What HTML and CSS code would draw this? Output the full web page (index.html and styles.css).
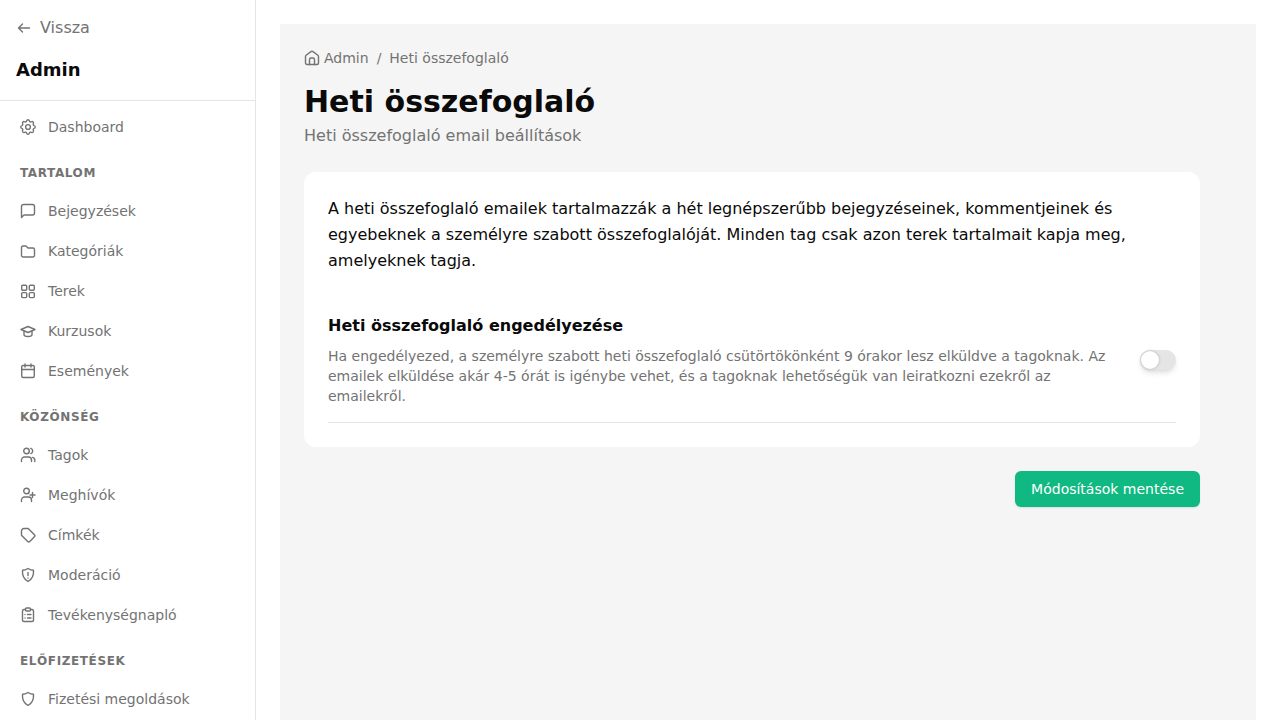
FILE: index.html
```html
<!DOCTYPE html>
<html lang="hu">
<head>
<meta charset="utf-8">
<title>Heti összefoglaló</title>
<link rel="stylesheet" href="styles.css">
</head>
<body>
<div class="app">
  <aside class="sidebar">
    <div class="side-head">
      <a class="back"><svg class="back-icon" viewBox="0 0 16 16"><path d="M13.500 8H2.500M6.500 4L2.500 8 6.500 12"/></svg>Vissza</a>
      <div class="side-title">Admin</div>
    </div>
    <nav class="nav">
      <a class="item"><svg class="icon icon-gear" viewBox="2 2 20 20"><path d="M10.3 4.3c.4-1.800 3-1.800 3.400 0a1.700 1.700 0 0 0 2.600 1.100c1.500-.9 3.300.8 2.400 2.400a1.700 1.700 0 0 0 1 2.500c1.800.4 1.800 3 0 3.400a1.700 1.700 0 0 0-1 2.600c.9 1.500-.9 3.300-2.400 2.400a1.700 1.700 0 0 0-2.600 1c-.4 1.800-3 1.800-3.400 0a1.700 1.700 0 0 0-2.600-1c-1.500.9-3.300-.9-2.400-2.400a1.700 1.700 0 0 0-1-2.600c-1.800-.4-1.800-3 0-3.400a1.700 1.700 0 0 0 1-2.500c-.9-1.600.9-3.300 2.400-2.400a1.700 1.700 0 0 0 2.600-1.100z"/><circle cx="12" cy="12" r="3"/></svg>Dashboard</a>
      <div class="label">Tartalom</div>
      <a class="item"><svg class="icon" viewBox="0 0 16 16"><path d="M1.500 14.500V3.500a2 2 0 0 1 2-2h9a2 2 0 0 1 2 2v6.500a2 2 0 0 1-2 2H4z"/></svg>Bejegyzések</a>
      <a class="item"><svg class="icon" viewBox="0 0 16 16"><path d="M1.500 4.500A1.500 1.500 0 0 1 3 3h3l2 2h5a1.500 1.500 0 0 1 1.500 1.500v6A1.500 1.500 0 0 1 13 14H3a1.500 1.500 0 0 1-1.500-1.500z"/></svg>Kategóriák</a>
      <a class="item"><svg class="icon" viewBox="0 0 16 16"><rect x="1.700" y="2.200" width="5" height="5" rx="1"/><rect x="9.300" y="2.200" width="5" height="5" rx="1"/><rect x="1.700" y="9.600" width="5" height="5" rx="1"/><rect x="9.300" y="9.600" width="5" height="5" rx="1"/></svg>Terek</a>
      <a class="item"><svg class="icon" viewBox="0 0 16 16"><path d="M15 6.500L8 3.500 1 6.500l7 3 7-3z"/><path d="M4 8.200v3.300c0 1.200 1.800 2 4 2s4-.8 4-2V8.200"/></svg>Kurzusok</a>
      <a class="item"><svg class="icon" viewBox="0 0 16 16"><rect x="1.700" y="2.500" width="12.600" height="12" rx="1.500"/><path d="M5 1v3M11 1v3M1.700 6.500h12.600"/></svg>Események</a>
      <div class="label">Közönség</div>
      <a class="item"><svg class="icon" viewBox="0 0 16 16"><circle cx="6.500" cy="4" r="2.800"/><path d="M1.500 14.500V13a3 3 0 0 1 3-3h4a3 3 0 0 1 3 3v1.500M10.800 1.300a2.800 2.800 0 0 1 0 5.300M14.800 14.500v-1.200a3 3 0 0 0-2.200-2.900"/></svg>Tagok</a>
      <a class="item"><svg class="icon" viewBox="0 0 16 16"><circle cx="6.500" cy="4" r="2.800"/><path d="M1.500 14.500V13a3 3 0 0 1 3-3h4a3 3 0 0 1 3 3v1.500M10 8h5M12.500 5.500v5"/></svg>Meghívók</a>
      <a class="item"><svg class="icon" viewBox="0 0 16 16"><path d="M4 1.500h4.200l6.200 6.200a1.500 1.500 0 0 1 0 2.100l-4.600 4.600a1.500 1.500 0 0 1-2.100 0L1.500 8.200V4A2.500 2.500 0 0 1 4 1.500z"/></svg>Címkék</a>
      <a class="item"><svg class="icon" viewBox="0 0 16 16"><path d="M8 1.500c2 1.300 3.800 1.800 5.500 1.800.4 5-1.500 9-5.500 11.200C4 12.300 2.100 8.300 2.500 3.300 4.200 3.300 6 2.800 8 1.500z"/><path d="M8 5.500v3M8 11v.01"/></svg>Moderáció</a>
      <a class="item"><svg class="icon" viewBox="0 0 16 16"><path d="M5.500 2.500H4A1.500 1.500 0 0 0 2.500 4v9A1.500 1.500 0 0 0 4 14.500h8a1.500 1.500 0 0 0 1.500-1.500V4A1.500 1.500 0 0 0 12 2.500h-1.500"/><rect x="5.500" y="1" width="5" height="3" rx="1"/><path d="M5 7.500h.01M7.500 7.500H11M5 11h.01M7.500 11H11"/></svg>Tevékenységnapló</a>
      <div class="label">Előfizetések</div>
      <a class="item"><svg class="icon" viewBox="0 0 16 16"><path d="M8 1.500c2 1.300 3.800 1.800 5.500 1.800.4 5-1.500 9-5.500 11.200C4 12.300 2.100 8.300 2.500 3.300 4.200 3.300 6 2.800 8 1.500z"/></svg>Fizetési megoldások</a>
    </nav>
  </aside>
  <main class="main">
    <div class="panel">
      <div class="content">
        <div class="crumbs"><svg class="home" viewBox="0 0 16 16"><path d="M1.500 13V6.500a1.500 1.500 0 0 1 .6-1.200L7 1.600a1.500 1.500 0 0 1 2 0l4.900 3.700a1.500 1.500 0 0 1 .6 1.200V13a1.500 1.500 0 0 1-1.500 1.500H3A1.500 1.500 0 0 1 1.500 13z"/><path d="M5.500 14.500v-5A1.500 1.500 0 0 1 7 8h2a1.500 1.500 0 0 1 1.500 1.500v5"/></svg><span>Admin</span><span class="sep">/</span><span>Heti összefoglaló</span></div>
        <h1 class="title">Heti összefoglaló</h1>
        <p class="subtitle">Heti összefoglaló email beállítások</p>
        <section class="card">
          <p class="intro">A heti összefoglaló emailek tartalmazzák a hét legnépszerűbb bejegyzéseinek, kommentjeinek és egyebeknek a személyre szabott összefoglalóját. Minden tag csak azon terek tartalmait kapja meg, amelyeknek tagja.</p>
          <div class="setting">
            <h2 class="setting-title">Heti összefoglaló engedélyezése</h2>
            <div class="setting-row">
              <p class="setting-text">Ha engedélyezed, a személyre szabott heti összefoglaló csütörtökönként 9 órakor lesz elküldve a tagoknak. Az emailek elküldése akár 4-5 órát is igénybe vehet, és a tagoknak lehetőségük van leiratkozni ezekről az emailekről.</p>
              <span class="toggle"><span class="knob"></span></span>
            </div>
          </div>
        </section>
        <div class="actions"><button class="save" type="button">Módosítások mentése</button></div>
      </div>
    </div>
  </main>
</div>
</body>
</html>
```
FILE: styles.css
```css
* { box-sizing: border-box; }
html, body { margin: 0; height: 100%; overflow: hidden; }
body { font-family: "DejaVu Sans", sans-serif; background: #fff; color: #000; }
.app { display: flex; height: 720px; }

.sidebar { width: 256px; flex: none; border-right: 1px solid #e5e5e5; overflow: hidden; }
.side-head { height: 101px; padding: 16px 16px 0; border-bottom: 1px solid #e5e5e5; }
.back { display: flex; align-items: center; gap: 8px; height: 24px; font-size: 16px; line-height: 24px; color: #737373; }
.back-icon { width: 16px; height: 16px; fill: none; stroke: #737373; stroke-width: 1.4; stroke-linecap: round; stroke-linejoin: round; }
.side-title { margin-top: 16px; font-size: 18px; line-height: 28px; font-weight: 700; color: #0a0a0a; }

.nav { padding: 6px 8px 0; }
.item { display: flex; align-items: center; gap: 12px; height: 40px; padding: 0 12px; font-size: 14px; color: #737373; }
.icon { width: 16px; height: 16px; flex: none; fill: none; stroke: #737373; stroke-width: 1.4; stroke-linecap: round; stroke-linejoin: round; }
.icon-gear { stroke-width: 1.7; }
.label { height: 16px; margin: 17px 0 10px; padding: 0 12px; font-size: 12px; line-height: 16px; font-weight: 700; letter-spacing: .6px; text-transform: uppercase; color: #737373; }
.item + .label { margin-top: 18px; }

.main { flex: 1; padding: 24px 24px 0; min-width: 0; }
.panel { height: 100%; padding: 24px; background: #f5f5f5; }
.content { width: 896px; }

.crumbs { display: flex; align-items: center; height: 20px; font-size: 14px; line-height: 20px; color: #737373; }
.home { width: 16px; height: 16px; margin-right: 4px; flex: none; fill: none; stroke: #737373; stroke-width: 1.4; stroke-linecap: round; stroke-linejoin: round; }
.sep { margin: 0 8px; }
.title { margin: 16px 0 0; font-size: 30px; line-height: 36px; font-weight: 700; color: #0a0a0a; }
.subtitle { margin: 4px 0 0; font-size: 16px; line-height: 24px; color: #737373; }

.card { margin-top: 24px; padding: 24px; background: #fff; border-radius: 12px; }
.intro { margin: 0; font-size: 16px; line-height: 26px; color: #0a0a0a; }
.setting { margin-top: 40px; padding-bottom: 16px; border-bottom: 1px solid #e5e5e5; }
.setting-title { margin: 0; font-size: 16px; line-height: 24px; font-weight: 700; color: #0a0a0a; }
.setting-row { display: flex; align-items: flex-start; justify-content: space-between; gap: 32px; margin-top: 8px; }
.setting-text { margin: 0; width: 780px; font-size: 14px; line-height: 20px; color: #737373; }
.toggle { position: relative; flex: none; width: 36px; height: 20px; margin-top: 4px; border-radius: 10px; background: #e5e5e5; box-shadow: 0 4px 6px -1px rgba(0,0,0,.1), 0 2px 4px -2px rgba(0,0,0,.1); }
.knob { position: absolute; left: 1px; top: 1px; width: 18px; height: 18px; border-radius: 50%; background: #fff; box-shadow: 0 0 3px rgba(0,0,0,.25); }

.actions { display: flex; justify-content: flex-end; margin-top: 24px; }
.save { height: 36px; padding: 0 16px; border: 0; border-radius: 6px; background: #10b981; color: #fff; font: 14px/20px "DejaVu Sans", sans-serif; box-shadow: 0 1px 2px rgba(0,0,0,.1); }
```
